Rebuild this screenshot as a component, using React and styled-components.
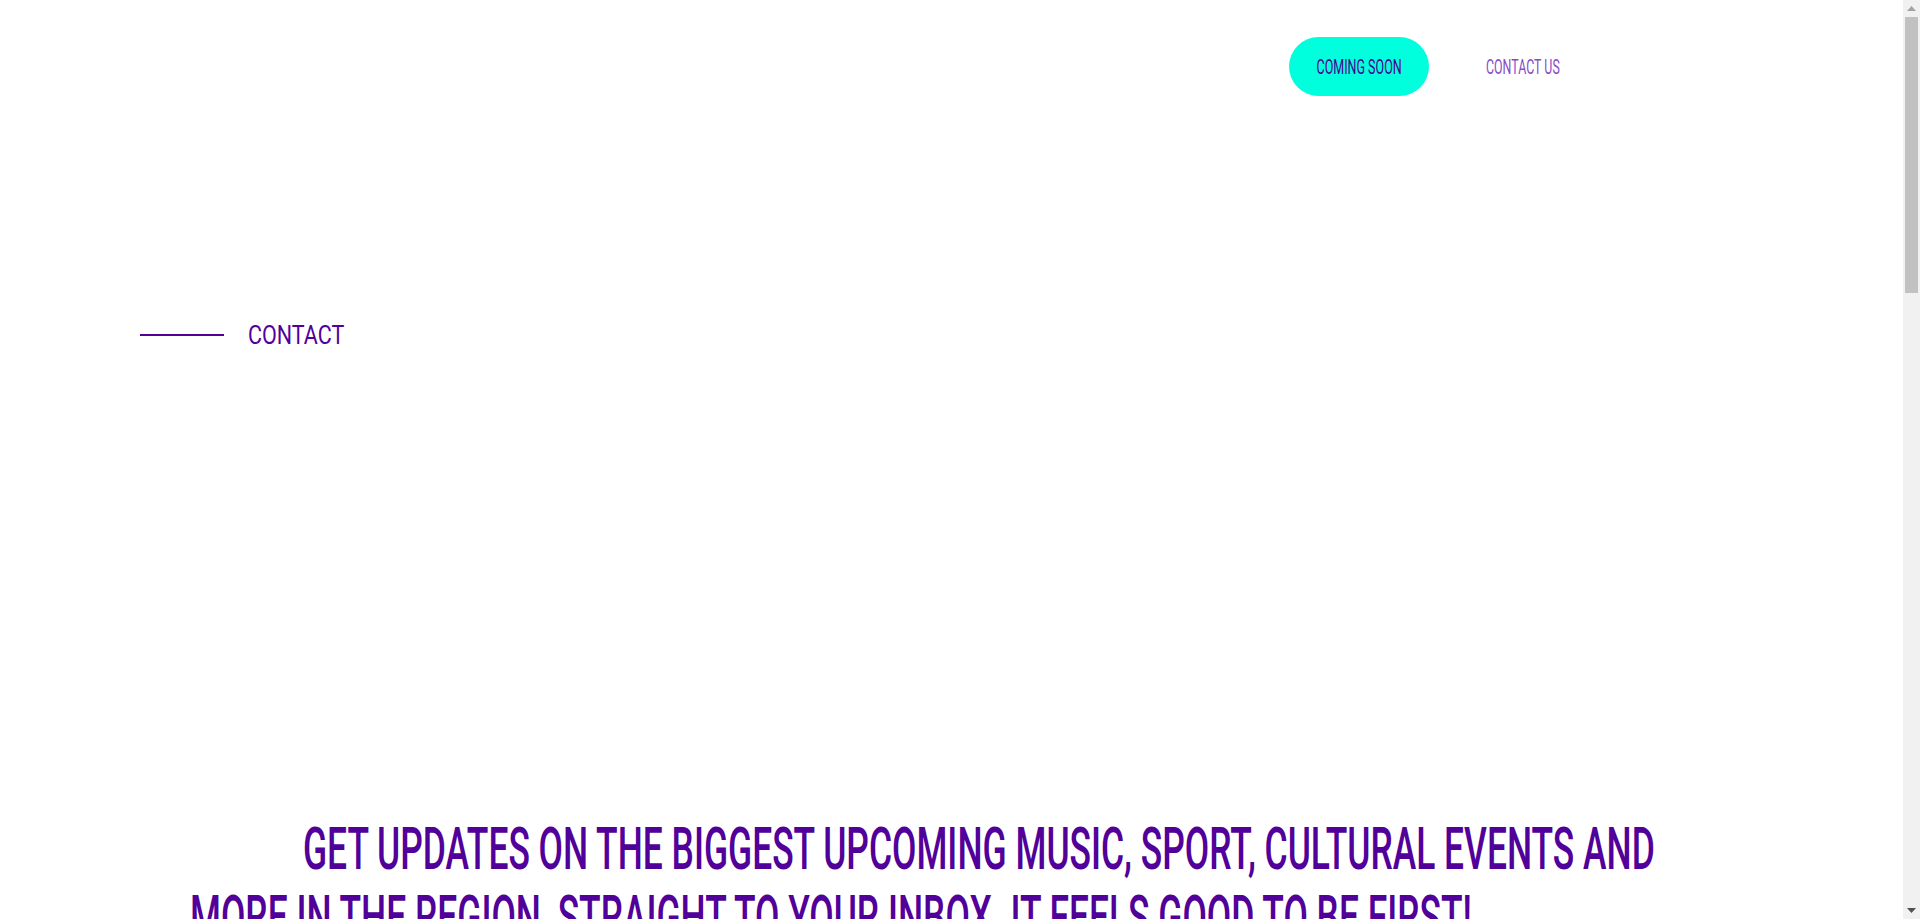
import React from 'react';
import styled, { createGlobalStyle } from 'styled-components';

const GlobalStyle = createGlobalStyle`
  html, body {
    margin: 0;
    padding: 0;
    background: #fff;
  }
  body {
    font-family: Roboto, 'Liberation Sans', sans-serif;
    color: #52009a;
  }
`;

const Page = styled.div`
  min-height: 2950px;
  width: calc(100% - 17px);
  display: flex;
  flex-direction: column;
`;

const Squeeze = styled.span`
  display: inline-block;
  white-space: nowrap;
  transform: scaleX(${(p) => p.$x});
  transform-origin: ${(p) => p.$origin || 'left center'};
`;

const Header = styled.header`
  display: flex;
  justify-content: flex-end;
  align-items: center;
  gap: 57px;
  padding: 37px 344px 0 0;
`;

const SoonButton = styled.a`
  width: 140px;
  height: 59px;
  border-radius: 30px;
  background-color: #00ffdd;
  color: #4a0090;
  font-size: 20px;
  display: flex;
  align-items: center;
  justify-content: center;
  text-decoration: none;
  cursor: pointer;
`;

const NavLink = styled.a`
  width: 73px;
  display: flex;
  color: #8a4cc8;
  font-size: 20px;
  text-decoration: none;
  cursor: pointer;
`;

const SectionLabel = styled.div`
  display: flex;
  align-items: center;
  gap: 24px;
  padding-left: 140px;
  margin-top: 224px;
  height: 30px;

  .label_line {
    width: 84px;
    height: 2px;
    background-color: #52009a;
  }

  .label_text {
    font-size: 25px;
    color: #52009a;
  }
`;

const HEAD_SCALE = 0.59;

const HeadingWrap = styled.section`
  padding-left: 190px;
  margin-top: 465px;
  overflow: hidden;
`;

const Heading = styled.h2`
  margin: 0;
  width: ${1520 / HEAD_SCALE}px;
  font-size: 60px;
  line-height: 68px;
  font-weight: 500;
  color: #52009a;
  text-indent: ${113 / HEAD_SCALE}px;
  transform: scaleX(${HEAD_SCALE});
  transform-origin: left top;
`;

/* the window's scrollbar, as the reference shows it */
const ScrollTrack = styled.div`
  position: fixed;
  top: 0;
  right: 0;
  width: 17px;
  height: 100vh;
  background-color: #f1f1f1;
  display: flex;
  flex-direction: column;
  align-items: center;

  .scroll_arrow {
    height: 17px;
    display: flex;
    align-items: center;
    justify-content: center;
  }

  .scroll_thumb {
    width: 13px;
    height: 276px;
    background-color: #c1c1c1;
  }

  .scroll_space {
    flex: 1;
  }
`;

const Arrow = ({ down, color }) => (
  <svg width='9' height='5' viewBox='0 0 9 5'>
    <polygon points={down ? '0,0 9,0 4.5,5' : '0,5 9,5 4.5,0'} fill={color} />
  </svg>
);

export default function App() {
  return (
    <Page>
      <GlobalStyle />
      <Header>
        <SoonButton>
          <Squeeze $x={0.625} $origin='center'>COMING SOON</Squeeze>
        </SoonButton>
        <NavLink>
          <Squeeze $x={0.62}>CONTACT US</Squeeze>
        </NavLink>
      </Header>

      <SectionLabel>
        <div className='label_line' />
        <Squeeze className='label_text' $x={0.86}>CONTACT</Squeeze>
      </SectionLabel>

      <HeadingWrap>
        <Heading>
          GET UPDATES ON THE BIGGEST UPCOMING MUSIC, SPORT, CULTURAL EVENTS AND MORE IN THE
          REGION, STRAIGHT TO YOUR INBOX. IT FEELS GOOD TO BE FIRST!
        </Heading>
      </HeadingWrap>

      <ScrollTrack>
        <div className='scroll_arrow'>
          <Arrow color='#a3a3a3' />
        </div>
        <div className='scroll_thumb' />
        <div className='scroll_space' />
        <div className='scroll_arrow'>
          <Arrow down color='#505050' />
        </div>
      </ScrollTrack>
    </Page>
  );
}
